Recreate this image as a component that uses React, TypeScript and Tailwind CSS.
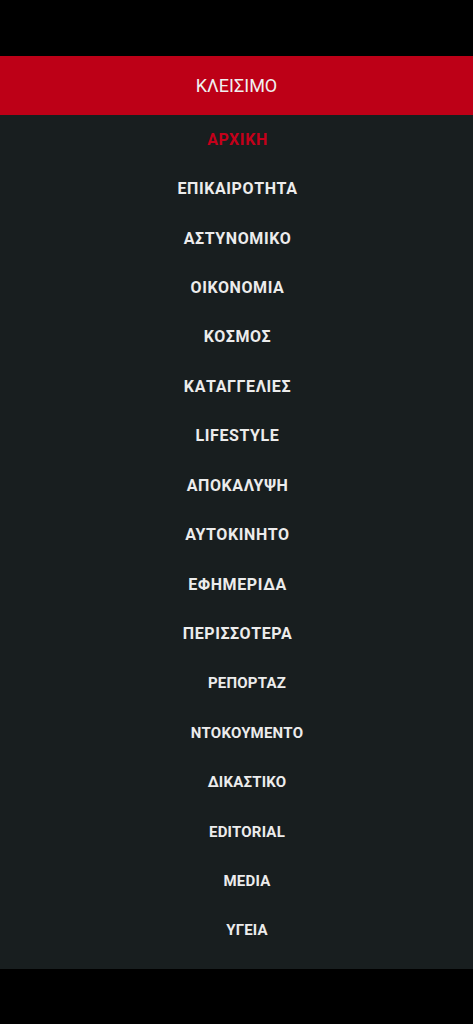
const mainItems = [
  "ΕΠΙΚΑΙΡΟΤΗΤΑ",
  "ΑΣΤΥΝΟΜΙΚΟ",
  "ΟΙΚΟΝΟΜΙΑ",
  "ΚΟΣΜΟΣ",
  "ΚΑΤΑΓΓΕΛΙΕΣ",
  "LIFESTYLE",
  "ΑΠΟΚΑΛΥΨΗ",
  "ΑΥΤΟΚΙΝΗΤΟ",
  "ΕΦΗΜΕΡΙΔΑ",
  "ΠΕΡΙΣΣΟΤΕΡΑ",
];

const subItems = ["ΡΕΠΟΡΤΑΖ", "ΝΤΟΚΟΥΜΕΝΤΟ", "ΔΙΚΑΣΤΙΚΟ", "EDITORIAL", "MEDIA", "ΥΓΕΙΑ"];

export default function App() {
  return (
    <div className="min-h-[1024px] bg-black pt-[56px] font-['Roboto','Noto_Sans',sans-serif]">
      <button className="flex h-[59px] w-full items-center justify-center bg-[#bd0017] text-[18px] text-[#f0f0f0]">
        ΚΛΕΙΣΙΜΟ
      </button>
      <nav className="flex flex-col bg-[#181e1f] pb-[14px]">
        <a
          href="#"
          className="flex h-[49.44px] items-center justify-center pl-[2px] text-[16px] font-bold tracking-[0.6px] text-[#c4001a]"
        >
          ΑΡΧΙΚΗ
        </a>
        {mainItems.map((item) => (
          <a
            key={item}
            href="#"
            className="flex h-[49.44px] items-center justify-center pl-[2px] text-[16px] font-bold tracking-[0.6px] text-[#ececec]"
          >
            {item}
          </a>
        ))}
        {subItems.map((item) => (
          <a
            key={item}
            href="#"
            className="flex h-[49.44px] items-center justify-center pl-[21px] text-[15px] font-bold tracking-[0.2px] text-[#ececec]"
          >
            {item}
          </a>
        ))}
      </nav>
    </div>
  );
}
